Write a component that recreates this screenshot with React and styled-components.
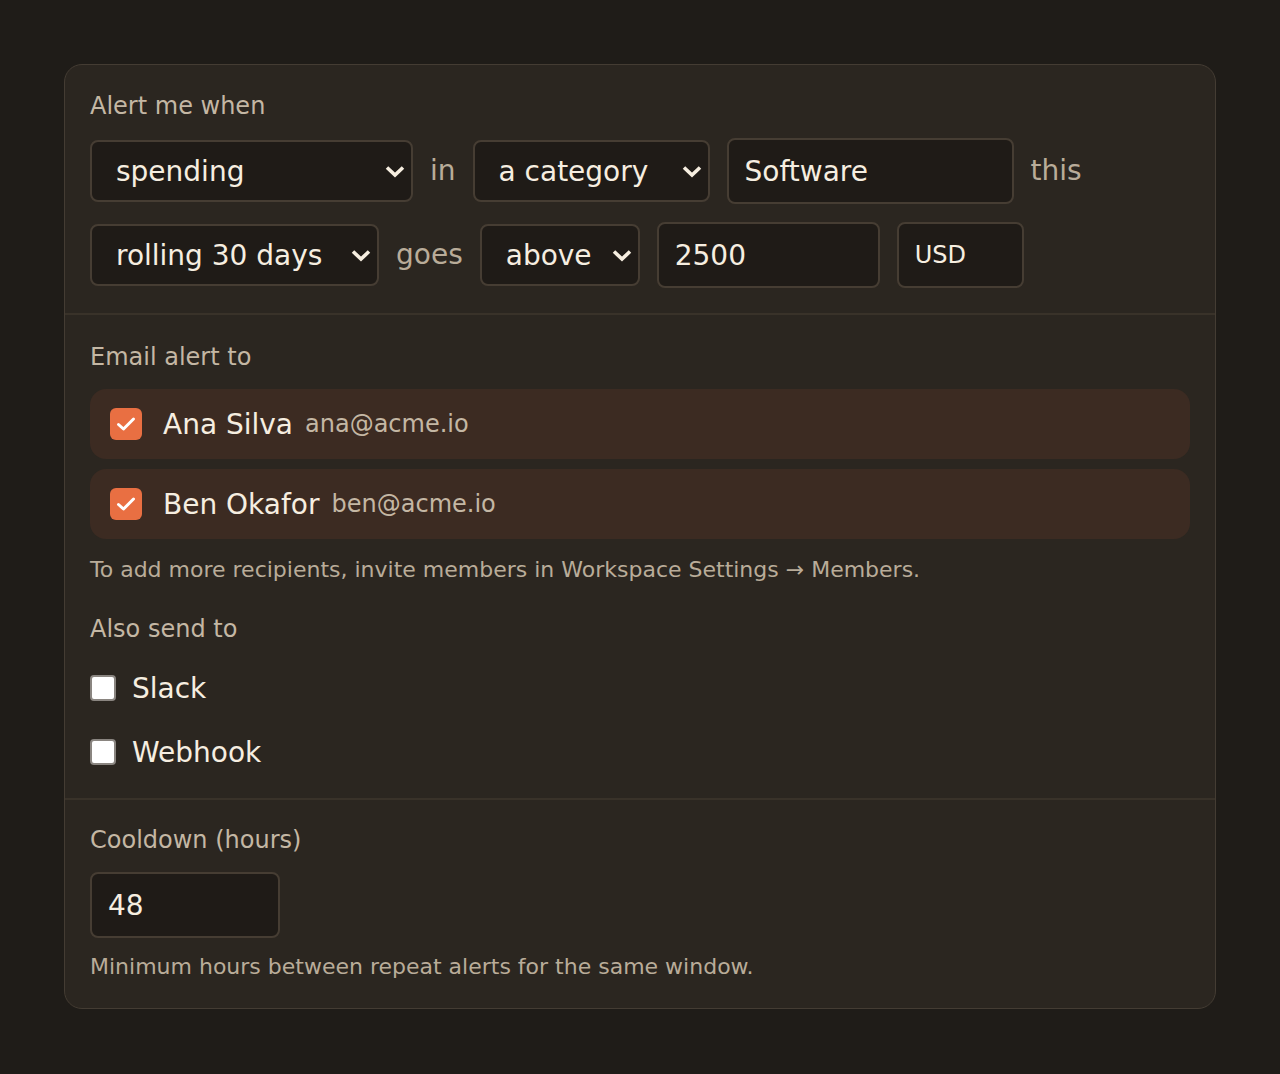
import React from "react";
import styled, { createGlobalStyle } from "styled-components";

const Global = createGlobalStyle`
  * { box-sizing: border-box; }
  html, body { margin: 0; padding: 0; }
  body {
    background: #1f1c18;
    font-family: "DejaVu Sans", Verdana, sans-serif;
    color: #f5ecdc;
  }
`;

const Page = styled.div`
  padding: 64px;
`;

const Card = styled.div`
  background: #2b2620;
  border: 1px solid #443c33;
  border-radius: 18px;
  overflow: hidden;
`;

const Section = styled.section`
  padding: ${(p) => p.$pad || "25px"};
  border-top: ${(p) => (p.$first ? "none" : "2px solid #393229")};
`;

const Label = styled.div`
  font-size: 24px;
  line-height: 30px;
  color: #c4b7a4;
  margin-bottom: ${(p) => p.$mb || 18}px;
`;

const Rows = styled.div`
  display: flex;
  flex-direction: column;
  gap: 18px;
`;

const Row = styled.div`
  display: flex;
  align-items: center;
  gap: 17px;
`;

const Word = styled.span`
  font-size: 28px;
  line-height: 34px;
  color: #b9ac99;
`;

const SelectWrap = styled.div`
  position: relative;
  width: ${(p) => p.$w}px;
  height: 62px;
  flex: none;
`;

const Select = styled.select`
  appearance: none;
  -webkit-appearance: none;
  width: 100%;
  height: 100%;
  background: #1f1b17;
  border: 2px solid #463d33;
  border-radius: 8px;
  color: #f6eee0;
  font-family: "DejaVu Sans", Verdana, sans-serif;
  font-size: 28px;
  padding: 0 44px 0 24px;
  outline: none;
`;

const Chevron = styled.svg`
  position: absolute;
  right: 7px;
  top: 50%;
  transform: translateY(-50%);
  pointer-events: none;
`;

const Input = styled.input`
  width: ${(p) => p.$w}px;
  height: 66px;
  flex: none;
  background: #1f1b17;
  border: 2px solid #463d33;
  border-radius: 8px;
  color: #f6eee0;
  font-family: "DejaVu Sans", Verdana, sans-serif;
  font-size: ${(p) => p.$fs || 28}px;
  padding: 0 16px;
  outline: none;
`;

const Recipients = styled.div`
  display: flex;
  flex-direction: column;
  gap: 10px;
`;

const Recipient = styled.label`
  display: flex;
  align-items: center;
  height: 70px;
  padding: 0 20px;
  background: #3c2b22;
  border-radius: 16px;
`;

const OrangeCheck = styled.span`
  width: 32px;
  height: 32px;
  border-radius: 6px;
  background: #e96f42;
  display: flex;
  align-items: center;
  justify-content: center;
  margin-right: 21px;
  flex: none;
`;

const Name = styled.span`
  font-size: 28px;
  color: #f6eee0;
  margin-right: 12px;
`;

const Email = styled.span`
  font-size: 24px;
  color: #c4b7a4;
`;

const Hint = styled.p`
  margin: ${(p) => p.$m || "0"};
  font-size: 22px;
  line-height: 28px;
  color: #b9ac99;
`;

const Options = styled.div`
  display: flex;
  flex-direction: column;
  gap: 20px;
`;

const Option = styled.label`
  display: flex;
  align-items: center;
  height: 44px;
  gap: 16px;
  font-size: 28px;
  color: #f6eee0;
`;

const Box = styled.span`
  width: 26px;
  height: 26px;
  border: 2px solid #8a8580;
  border-radius: 4px;
  background: #ffffff;
  flex: none;
`;

function ChevronIcon() {
  return (
    <Chevron width="22" height="14" viewBox="0 0 22 14">
      <path d="M3 3.5 L11 11 L19 3.5" fill="none" stroke="#f6eee0" strokeWidth="3.6" strokeLinecap="butt" strokeLinejoin="miter" />
    </Chevron>
  );
}

function Dropdown({ w, value }) {
  return (
    <SelectWrap $w={w}>
      <Select defaultValue={value}>
        <option>{value}</option>
      </Select>
      <ChevronIcon />
    </SelectWrap>
  );
}

function Checked() {
  return (
    <OrangeCheck>
      <svg width="20" height="16" viewBox="0 0 20 16">
        <path d="M2.5 8.5 L7.5 13 L17.5 3" fill="none" stroke="#fff" strokeWidth="3" strokeLinecap="round" strokeLinejoin="round" />
      </svg>
    </OrangeCheck>
  );
}

export default function App() {
  return (
    <>
      <Global />
      <Page>
        <Card>
          <Section $first $pad="26px 25px 25px">
            <Label $mb={17}>Alert me when</Label>
            <Rows>
              <Row>
                <Dropdown w={323} value="spending" />
                <Word>in</Word>
                <Dropdown w={237} value="a category" />
                <Input $w={287} defaultValue="Software" />
                <Word>this</Word>
              </Row>
              <Row>
                <Dropdown w={289} value="rolling 30 days" />
                <Word>goes</Word>
                <Dropdown w={160} value="above" />
                <Input $w={223} defaultValue="2500" />
                <Input $w={127} $fs={24} defaultValue="USD" />
              </Row>
            </Rows>
          </Section>
          <Section $pad="27px 25px 24px">
            <Label $mb={17}>Email alert to</Label>
            <Recipients>
              <Recipient>
                <Checked />
                <Name>Ana Silva</Name>
                <Email>ana@acme.io</Email>
              </Recipient>
              <Recipient>
                <Checked />
                <Name>Ben Okafor</Name>
                <Email>ben@acme.io</Email>
              </Recipient>
            </Recipients>
            <Hint $m="17px 0 30px">
              To add more recipients, invite members in Workspace Settings → Members.
            </Hint>
            <Label $mb={22}>Also send to</Label>
            <Options>
              <Option>
                <Box />
                Slack
              </Option>
              <Option>
                <Box />
                Webhook
              </Option>
            </Options>
          </Section>
          <Section $pad="25px 25px 27px">
            <Label $mb={17}>Cooldown (hours)</Label>
            <Input $w={190} defaultValue="48" />
            <Hint $m="15px 0 0">Minimum hours between repeat alerts for the same window.</Hint>
          </Section>
        </Card>
      </Page>
    </>
  );
}
